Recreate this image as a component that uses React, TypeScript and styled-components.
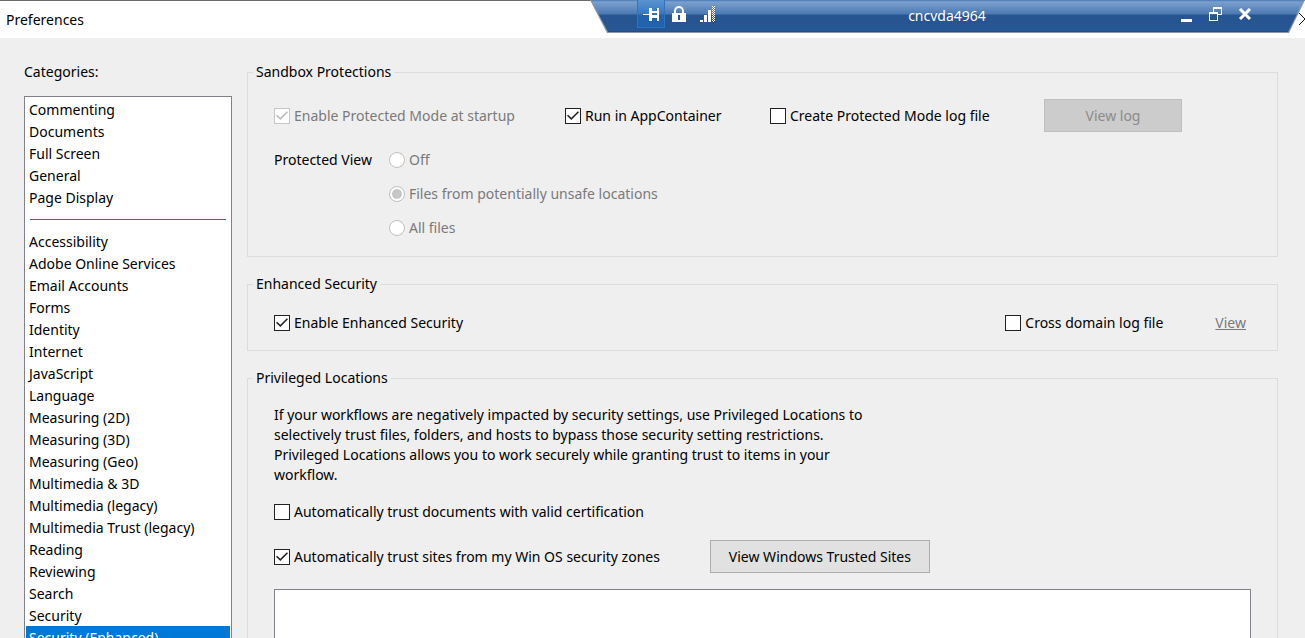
import React, { useId } from "react";
import styled, { createGlobalStyle } from "styled-components";

const GlobalStyle = createGlobalStyle`
  *, *::before, *::after { box-sizing: border-box; }
  body {
    margin: 0;
    background: #efefef;
    color: #000;
    font-family: "Noto Sans", "Open Sans", sans-serif;
    font-size: 14px;
    line-height: 20px;
  }
  button, input, textarea { font: inherit; color: inherit; }
`;

const Window = styled.div`
  position: relative;
  display: flex;
  flex-direction: column;
  height: 100vh;
  overflow: hidden;
`;

const TitleBar = styled.header`
  flex: none;
  display: flex;
  align-items: center;
  height: 38px;
  padding-left: 6px;
  border-top: 1px solid #6c6a6c;
  background: #fff;
`;

const Title = styled.h1`
  margin: 0;
  font-size: 14px;
  font-weight: 400;
`;

const CloseEdge = styled.svg`
  position: absolute;
  top: 12px;
  right: 0;
`;

const ConnectionBar = styled.div`
  position: absolute;
  top: 0;
  left: 590px;
  right: 0;
  height: 33px;
  display: flex;
  align-items: flex-start;
  justify-content: space-between;
  padding: 0 46px 0 47px;
  color: #fff;
`;

const BarShape = styled.div`
  position: absolute;
  inset: 0;
  background: #8c95a3;
  clip-path: polygon(0 0, 100% 0, calc(100% - 16px) 100%, 17px 100%);

  &::after {
    content: "";
    position: absolute;
    inset: 0 0 1px 0;
    background: linear-gradient(#4a7ab5 0, #7ba0cd 2px, #4b79b3 14px, #26558f 15px, #265695 31px, #1d4478 32px);
    clip-path: polygon(1px 0, calc(100% - 1px) 0, calc(100% - 17px) 100%, 18px 100%);
  }
`;

const BarGroup = styled.div<{ $gap?: number }>`
  position: relative;
  display: flex;
  gap: ${(p) => p.$gap ?? 0}px;
`;

const BarButton = styled.button<{ $active?: boolean }>`
  display: flex;
  align-items: center;
  justify-content: center;
  width: 28px;
  height: 28px;
  padding: 0;
  border: 1px solid ${(p) => (p.$active ? "#2f74c0" : "transparent")};
  border-top: 0;
  background: ${(p) => (p.$active ? "linear-gradient(#5a93d0, #3878bf 14px, #2263ad 15px)" : "none")};
`;

const HostName = styled.span`
  position: relative;
  line-height: 32px;
`;

const Body = styled.main`
  flex: 1;
  display: flex;
  gap: 15px;
  min-height: 0;
  padding: 24px 27px 0 24px;
`;

const Sidebar = styled.nav`
  flex: none;
  width: 208px;
`;

const SidebarTitle = styled.h2`
  margin: 0 0 14px;
  font-size: 14px;
  font-weight: 400;
`;

const CategoryList = styled.ul`
  margin: 0;
  padding: 1px;
  border: 1px solid #7f8389;
  background: #fff;
  list-style: none;
`;

const Category = styled.li<{ $selected?: boolean }>`
  height: 22px;
  padding: 1px 3px 0;
  line-height: 22px;
  background: ${(p) => (p.$selected ? "#0078d7" : "transparent")};
  color: ${(p) => (p.$selected ? "#fff" : "#000")};
`;

const Divider = styled.li`
  height: 22px;
  padding: 11px 4px 0;

  &::before {
    content: "";
    display: block;
    height: 1px;
    background: #1c7a94;
  }
`;

const Panels = styled.div`
  flex: 1;
  display: flex;
  flex-direction: column;
  gap: 17px;
  min-width: 0;
`;

const Group = styled.fieldset`
  min-width: 0;
  margin: 0;
  padding: 0 26px 11px;
  border: 1px solid #dcdcdc;
`;

const Legend = styled.legend`
  margin-left: -21px;
  padding: 0 3px;
`;

const SandboxRow = styled.div`
  display: grid;
  grid-template-columns: 291fr 205fr 274fr 207fr;
  align-items: center;
  margin-top: 17px;
  white-space: nowrap;
`;

const ProtectedView = styled.div`
  display: flex;
  gap: 17px;
  margin-top: 11px;
  line-height: 34px;
`;

const Radios = styled.div`
  display: flex;
  flex-direction: column;
`;

const Row = styled.div<{ $top: number; $gap?: number }>`
  display: flex;
  align-items: center;
  gap: ${(p) => p.$gap ?? 0}px;
  height: 33px;
  margin-top: ${(p) => p.$top}px;
`;

const Spacer = styled.div`
  flex: 1;
`;

const Choice = styled.span<{ $disabled?: boolean }>`
  display: flex;
  align-items: center;
  gap: 4px;
  color: ${(p) => (p.$disabled ? "#7a7a7a" : "#000")};
`;

const CheckInput = styled.input`
  appearance: none;
  flex: none;
  display: grid;
  place-items: center;
  width: 16px;
  height: 16px;
  margin: 0;
  border: 1px solid #222;
  background: #fff;

  &:checked::before {
    content: "";
    width: 12px;
    height: 12px;
    background: #222;
    clip-path: polygon(0 52%, 9% 43%, 36% 69%, 91% 14%, 100% 23%, 36% 87%);
  }
  &:disabled { border-color: #c6c6c6; }
  &:disabled::before { background: #bcbcbc; }
`;

const RadioInput = styled.input`
  appearance: none;
  flex: none;
  display: grid;
  place-items: center;
  width: 16px;
  height: 16px;
  margin: 0;
  border: 1px solid #bfbfbf;
  border-radius: 50%;
  background: #fff;

  &:checked::before {
    content: "";
    width: 10px;
    height: 10px;
    border-radius: 50%;
    background: #c6c6c6;
  }
`;

const PushButton = styled.button<{ $width: number }>`
  width: ${(p) => p.$width}px;
  height: 33px;
  padding: 0;
  border: 1px solid #adadad;
  background: #e1e1e1;

  &:disabled {
    border-color: #bfbfbf;
    background: #ccc;
    color: #8b8b8b;
  }
`;

const ViewLink = styled.a`
  margin: 0 5px 0 52px;
  color: #7a7a7a;
`;

const Note = styled.p`
  max-width: 600px;
  margin: 17px 0 0;
`;

const HostList = styled.textarea`
  display: block;
  width: 100%;
  height: 140px;
  margin-top: 16px;
  border: 1px solid #7f8389;
  background: #fff;
  resize: none;
`;

type CheckProps = { label: string; checked?: boolean; disabled?: boolean };

function Check({ label, checked, disabled }: CheckProps) {
  const id = useId();
  return (
    <Choice $disabled={disabled}>
      <CheckInput id={id} type="checkbox" defaultChecked={checked} disabled={disabled} />
      <label htmlFor={id}>{label}</label>
    </Choice>
  );
}

function Radio({ label, checked }: CheckProps) {
  const id = useId();
  return (
    <Choice $disabled>
      <RadioInput id={id} type="radio" name="protected-view" defaultChecked={checked} disabled />
      <label htmlFor={id}>{label}</label>
    </Choice>
  );
}

const general = ["Commenting", "Documents", "Full Screen", "General", "Page Display"];
const categories = [
  "Accessibility", "Adobe Online Services", "Email Accounts", "Forms", "Identity", "Internet",
  "JavaScript", "Language", "Measuring (2D)", "Measuring (3D)", "Measuring (Geo)", "Multimedia & 3D",
  "Multimedia (legacy)", "Multimedia Trust (legacy)", "Reading", "Reviewing", "Search", "Security",
  "Security (Enhanced)",
];

export default function App() {
  return (
    <Window>
      <GlobalStyle />
      <TitleBar>
        <Title>Preferences</Title>
      </TitleBar>
      <Body>
        <Sidebar>
          <SidebarTitle>Categories:</SidebarTitle>
          <CategoryList>
            {general.map((c) => <Category key={c}>{c}</Category>)}
            <Divider role="separator" />
            {categories.map((c) => (
              <Category key={c} $selected={c === "Security (Enhanced)"}>{c}</Category>
            ))}
          </CategoryList>
        </Sidebar>
        <Panels>
          <Group>
            <Legend>Sandbox Protections</Legend>
            <SandboxRow>
              <Check label="Enable Protected Mode at startup" checked disabled />
              <Check label="Run in AppContainer" checked />
              <Check label="Create Protected Mode log file" />
              <PushButton $width={138} disabled>View log</PushButton>
            </SandboxRow>
            <ProtectedView>
              <span>Protected View</span>
              <Radios>
                <Radio label="Off" />
                <Radio label="Files from potentially unsafe locations" checked />
                <Radio label="All files" />
              </Radios>
            </ProtectedView>
          </Group>
          <Group>
            <Legend>Enhanced Security</Legend>
            <Row $top={12}>
              <Check label="Enable Enhanced Security" checked />
              <Spacer />
              <Check label="Cross domain log file" />
              <ViewLink href="#log">View</ViewLink>
            </Row>
          </Group>
          <Group>
            <Legend>Privileged Locations</Legend>
            <Note>
              If your workflows are negatively impacted by security settings, use Privileged Locations to
              selectively trust files, folders, and hosts to bypass those security setting restrictions.
              Privileged Locations allows you to work securely while granting trust to items in your
              workflow.
            </Note>
            <Row $top={10}>
              <Check label="Automatically trust documents with valid certification" />
            </Row>
            <Row $top={12} $gap={50}>
              <Check label="Automatically trust sites from my Win OS security zones" checked />
              <PushButton $width={220}>View Windows Trusted Sites</PushButton>
            </Row>
            <HostList aria-label="Privileged locations" />
          </Group>
        </Panels>
      </Body>
      <ConnectionBar>
        <BarShape />
        <BarGroup>
          <BarButton $active aria-label="Pin">
            <svg width="18" height="14" viewBox="0 0 18 14" fill="#fff" shapeRendering="crispEdges">
              <path d="M1 7h6v1H1zM7 1h3v13H7zM10 4h5v2h-5zM10 8h5v3h-5zM15 1h2v13h-2z" />
            </svg>
          </BarButton>
          <BarButton aria-label="Lock">
            <svg width="14" height="16" viewBox="0 0 14 16">
              <path d="M3 8V5a4 4 0 0 1 8 0v3" fill="none" stroke="#fff" strokeWidth="2" />
              <path d="M0 7h14v9H0zM6 9v5h2V9z" fill="#fff" fillRule="evenodd" />
            </svg>
          </BarButton>
          <BarButton aria-label="Signal">
            <svg width="16" height="16" viewBox="0 0 16 16" fill="#fff" shapeRendering="crispEdges">
              <path d="M1 14h3v2H1zM5 9h3v7H5zM9 4h3v12H9z" />
              <path d="M13.500 0v16M15.500 0v16" stroke="#fff" strokeDasharray="1 1" fill="none" />
              <path d="M14.500 1v15" stroke="#fff" strokeDasharray="1 1" fill="none" />
            </svg>
          </BarButton>
        </BarGroup>
        <HostName>cncvda4964</HostName>
        <BarGroup $gap={1}>
          <BarButton aria-label="Minimize">
            <svg width="12" height="16" viewBox="0 0 12 16"><path d="M0 13h11v3H0z" fill="#fff" /></svg>
          </BarButton>
          <BarButton aria-label="Restore">
            <svg width="14" height="16" viewBox="0 0 14 16" fill="none" stroke="#fff" shapeRendering="crispEdges">
              <path d="M4.500 6V1.500h8v7H9M.5 6.500h8v8h-8zM4 2.500h9M0 7.500h9" />
            </svg>
          </BarButton>
          <BarButton aria-label="Close">
            <svg width="14" height="12" viewBox="0 0 14 12"><path d="M2 1l10 10M12 1L2 11" stroke="#fff" strokeWidth="3" /></svg>
          </BarButton>
        </BarGroup>
      </ConnectionBar>
      <CloseEdge width="6" height="14" viewBox="0 0 6 14" aria-hidden="true">
        <path d="M0 1l6 6-6 6" fill="none" stroke="#111" />
      </CloseEdge>
    </Window>
  );
}
